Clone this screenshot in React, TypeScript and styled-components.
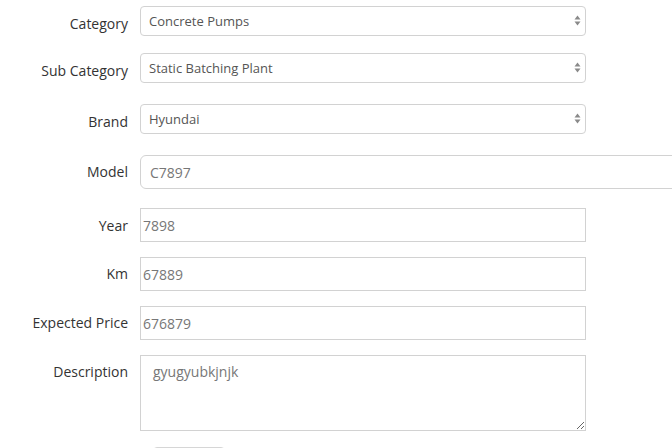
import React from "react";
import styled, { createGlobalStyle } from "styled-components";

const Global = createGlobalStyle`
  html, body { margin: 0; padding: 0; background: #fff; overflow: hidden; }
  body { font-family: "Open Sans", "Liberation Sans", sans-serif; }
`;

const Form = styled.form`
  display: flex;
  flex-direction: column;
  padding-top: 6px;
  width: 672px;
`;

const Row = styled.div<{ $mb: number }>`
  display: grid;
  grid-template-columns: 128px 1fr;
  column-gap: 12px;
  align-items: start;
  margin-bottom: ${(p) => p.$mb}px;
`;

const Label = styled.label<{ $pt: number }>`
  text-align: right;
  font-size: 14px;
  line-height: 20px;
  color: #333;
  padding-top: ${(p) => p.$pt}px;
  white-space: nowrap;
`;

const SelectWrap = styled.div`
  position: relative;
  width: 446px;
`;

const Select = styled.select`
  appearance: none;
  -webkit-appearance: none;
  box-sizing: border-box;
  width: 100%;
  height: 30px;
  border: 1px solid #d2d2d2;
  border-radius: 4px;
  background: #fff;
  padding: 0 24px 0 8px;
  font-family: "Open Sans", "Liberation Sans", sans-serif;
  font-size: 13px;
  color: #555;
  outline: none;
`;

const Arrows = styled.svg`
  position: absolute;
  right: 5px;
  top: 9px;
  pointer-events: none;
`;

const ModelWrap = styled.div`
  overflow: hidden;
`;

const Input = styled.input<{ $w: number; $round?: boolean; $pl: number }>`
  box-sizing: border-box;
  width: ${(p) => p.$w}px;
  height: 34px;
  border: 1px solid #d2d2d2;
  border-radius: ${(p) => (p.$round ? "6px" : "0")};
  padding: 0 0 0 ${(p) => p.$pl}px;
  font-family: "Open Sans", "Liberation Sans", sans-serif;
  font-size: 14px;
  color: #777;
  background: #fff;
  outline: none;
  display: block;
`;

const TextArea = styled.textarea`
  box-sizing: border-box;
  width: 446px;
  height: 76px;
  border: 1px solid #d2d2d2;
  border-radius: 0;
  padding: 6px 12px;
  font-family: "Open Sans", "Liberation Sans", sans-serif;
  font-size: 14px;
  line-height: 20px;
  color: #777;
  background: #fff;
  outline: none;
  resize: both;
  display: block;
`;

const ButtonRow = styled.div`
  display: flex;
  padding-left: 153px;
`;

const Button = styled.button`
  width: 72px;
  height: 34px;
  border: 1px solid #d6d6d6;
  border-radius: 4px;
  background: #f4f4f4;
`;

function SelectField({ value }: { value: string }) {
  return (
    <SelectWrap>
      <Select defaultValue={value}>
        <option>{value}</option>
      </Select>
      <Arrows width="7" height="12" viewBox="0 0 7 12">
        <path d="M3.5 0.5 L6.5 4.5 L0.5 4.5 Z" fill="#8a8a8a" />
        <path d="M0.5 6.5 L6.5 6.5 L3.5 10.5 Z" fill="#8a8a8a" />
      </Arrows>
    </SelectWrap>
  );
}

export default function App() {
  return (
    <>
      <Global />
      <Form onSubmit={(e) => e.preventDefault()}>
        <Row $mb={17}>
          <Label $pt={8}>Category</Label>
          <SelectField value="Concrete Pumps" />
        </Row>
        <Row $mb={21}>
          <Label $pt={8}>Sub Category</Label>
          <SelectField value="Static Batching Plant" />
        </Row>
        <Row $mb={21}>
          <Label $pt={8}>Brand</Label>
          <SelectField value="Hyundai" />
        </Row>
        <Row $mb={19}>
          <Label $pt={7}>Model</Label>
          <ModelWrap>
            <Input $w={600} $round $pl={9} defaultValue="C7897" />
          </ModelWrap>
        </Row>
        <Row $mb={15}>
          <Label $pt={8}>Year</Label>
          <Input $w={446} $pl={2} defaultValue="7898" />
        </Row>
        <Row $mb={15}>
          <Label $pt={7}>Km</Label>
          <Input $w={446} $pl={2} defaultValue="67889" />
        </Row>
        <Row $mb={15}>
          <Label $pt={7}>Expected Price</Label>
          <Input $w={446} $pl={2} defaultValue="676879" />
        </Row>
        <Row $mb={16}>
          <Label $pt={7}>Description</Label>
          <TextArea defaultValue="gyugyubkjnjk" />
        </Row>
        <ButtonRow>
          <Button type="submit" aria-label="Submit" />
        </ButtonRow>
      </Form>
    </>
  );
}
